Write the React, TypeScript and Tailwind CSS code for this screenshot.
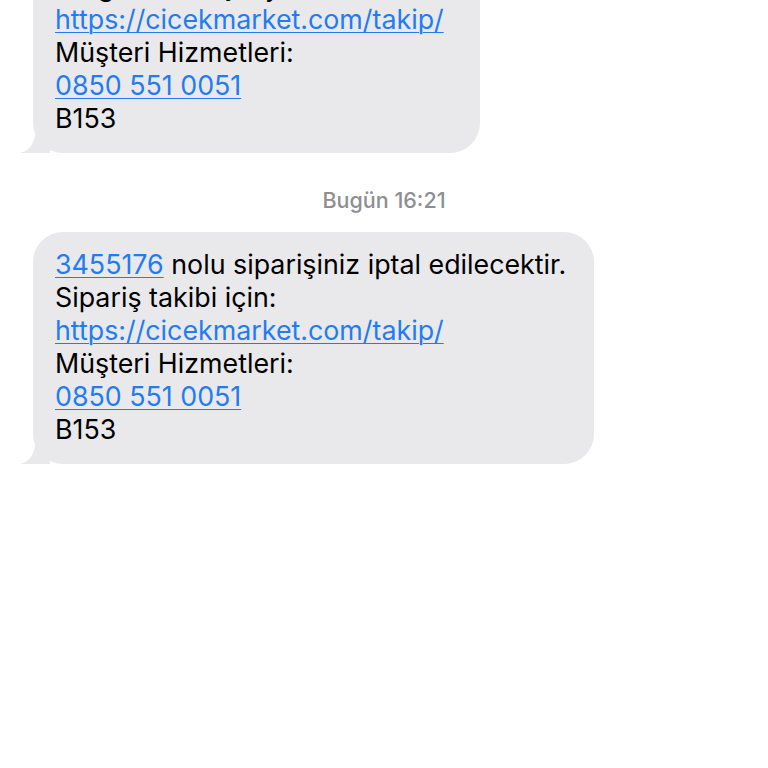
const link = 'text-[#1f7cf2] underline decoration-1 underline-offset-[3px]';

function Tail() {
  return (
    <svg className="absolute -left-[13px] bottom-0" width="30" height="22" viewBox="0 0 30 22">
      <path d="M30 0 L30 22 L0 22 C8 20 13 15 15 4 Z" fill="#e9e9eb" />
    </svg>
  );
}

function Bubble({ lines, className }: { lines: React.ReactNode[]; className?: string }) {
  return (
    <div className={`relative ml-[33px] rounded-[30px] bg-[#e9e9eb] pl-[22px] pr-[28px] pt-[16px] pb-[18px] ${className ?? 'w-fit'}`}>
      <Tail />
      <div className="relative text-[26.8px] leading-[33px] text-black">
        {lines.map((l, i) => (
          <div key={i}>{l}</div>
        ))}
      </div>
    </div>
  );
}

export default function App() {
  return (
    <div className="h-[768px] w-[768px] overflow-hidden bg-white" style={{ fontFamily: 'Inter, "Noto Sans", sans-serif' }}>
      <Bubble
        className="-mt-[79px] w-[447px]"
        lines={[
          <span>Siparişiniz kargoya verildi.</span>,
          <span>Kargo takibi için yazın:</span>,
          <a className={link}>https://cicekmarket.com/takip/</a>,
          <span>Müşteri Hizmetleri:</span>,
          <a className={link}>0850 551 0051</a>,
          <span>B153</span>,
        ]}
      />
      <div className="mt-[35px] mb-[20px] text-center text-[21.5px] font-medium leading-[24px] text-[#8e8e93]">
        Bugün 16:21
      </div>
      <Bubble
        lines={[
          <span>
            <a className={link}>3455176</a> nolu siparişiniz iptal edilecektir.
          </span>,
          <span>Sipariş takibi için:</span>,
          <a className={link}>https://cicekmarket.com/takip/</a>,
          <span>Müşteri Hizmetleri:</span>,
          <a className={link}>0850 551 0051</a>,
          <span>B153</span>,
        ]}
      />
    </div>
  );
}
